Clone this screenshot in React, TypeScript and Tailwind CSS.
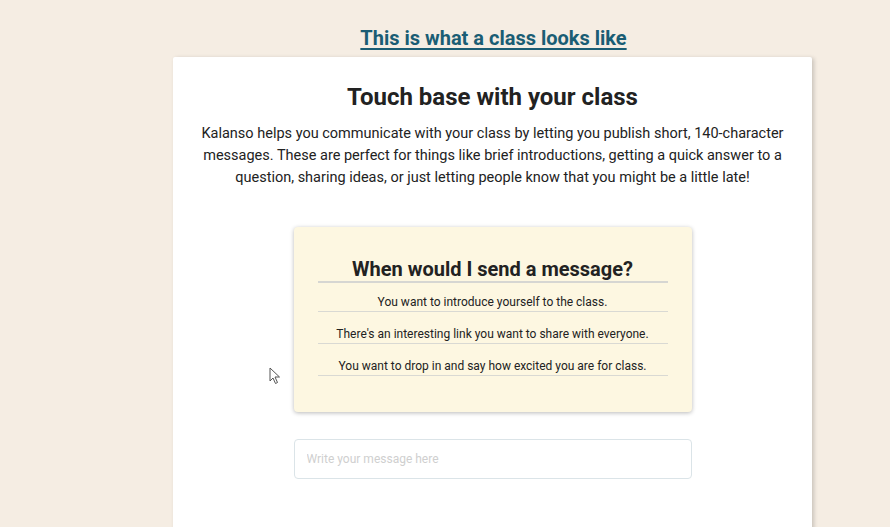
import React from 'react'

const items = [
  'You want to introduce yourself to the class.',
  "There's an interesting link you want to share with everyone.",
  'You want to drop in and say how excited you are for class.',
]

export default function App() {
  return (
    <div className="relative min-h-[527px] h-[527px] overflow-hidden bg-[#f5ede3] font-['Roboto',sans-serif] text-[#222]">
      <div className="flex flex-col items-center pl-[98px]">
        <a
          href="#"
          className="mt-[25px] ml-[-1px] text-[20px] font-bold leading-[26px] text-[#1a5d74] underline decoration-[2px] underline-offset-[3px]"
        >
          This is what a class looks like
        </a>

        <div className="mt-[6px] ml-[-3px] w-[639px] h-[480px] bg-white rounded-t-[2px] shadow-[2px_1px_4px_rgba(0,0,0,0.18)] flex flex-col items-center">
          <h1 className="mt-[25px] text-[24px] font-bold leading-[30px] text-[#222]">
            Touch base with your class
          </h1>
          <p className="mt-[11px] w-[592px] text-center text-[14.5px] leading-[22px] text-[#222]">
            Kalanso helps you communicate with your class by letting you publish short, 140-character
            messages. These are perfect for things like brief introductions, getting a quick answer to a
            question, sharing ideas, or just letting people know that you might be a little late!
          </p>

          <div className="mt-[38px] w-[398px] h-[185px] bg-[#fdf7e1] rounded-[4px] shadow-[0_1px_4px_rgba(0,0,0,0.28)] flex flex-col items-center">
            <div className="mt-[30px] w-[350px] border-b-2 border-[#d6d6d2] text-center">
              <h2 className="text-[20px] font-bold leading-[24px] text-[#222]">
                When would I send a message?
              </h2>
            </div>
            <ul className="w-[350px] mt-[11px]">
              {items.map((t) => (
                <li
                  key={t}
                  className="border-b border-[#d9d9d3] text-center text-[12px] leading-[16px] pb-[1px] mb-[14px] text-[#222]"
                >
                  {t}
                </li>
              ))}
            </ul>
          </div>

          <input
            type="text"
            placeholder="Write your message here"
            className="mt-[27px] w-[398px] h-[40px] rounded-[4px] border border-[#dbe4e8] bg-white px-[12px] text-[12px] outline-none placeholder:text-[#cfcfcf]"
          />
        </div>
      </div>

      {/* screen cursor captured in screenshot */}
      <svg
        className="absolute left-[269px] top-[367px]"
        width="12"
        height="18"
        viewBox="0 0 12 18"
      >
        <path d="M1 1 L1 14 L4 11 L6.5 16.5 L8.5 15.5 L6 10 L10.5 10 Z" fill="#fff" stroke="#555" strokeWidth="1" />
      </svg>
    </div>
  )
}
